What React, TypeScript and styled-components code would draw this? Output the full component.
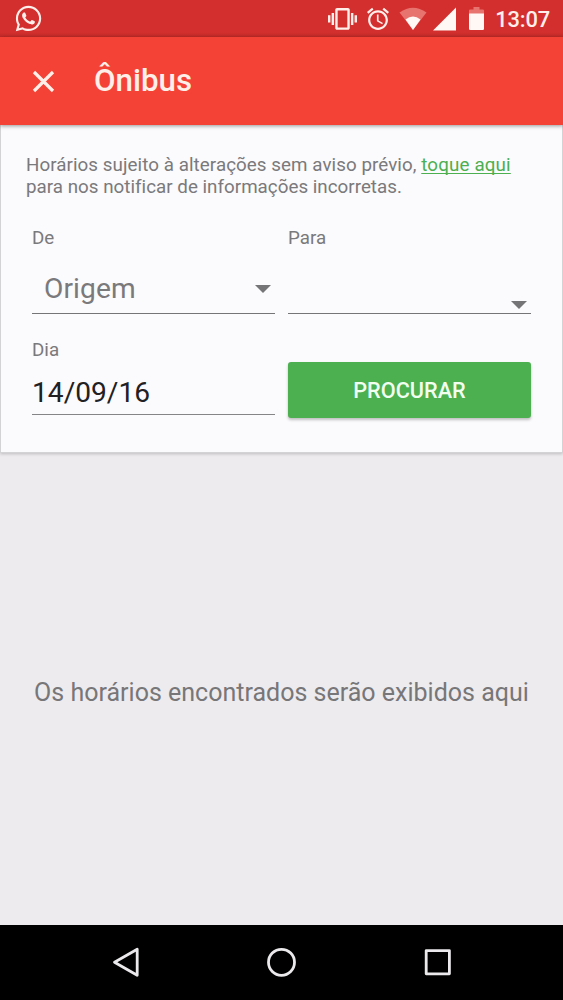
import React from 'react';
import styled, { createGlobalStyle } from 'styled-components';
import { FaWhatsapp } from 'react-icons/fa';

const GlobalStyle = createGlobalStyle`
  * { box-sizing: border-box; }
  body { margin: 0; font-family: Roboto, sans-serif; background: #edebee; }
`;

const Screen = styled.div`
  width: 563px;
  height: 1000px;
  display: flex;
  flex-direction: column;
  overflow: hidden;
  background: #edebee;
`;

const StatusBar = styled.header`
  flex: 0 0 37px;
  display: flex;
  justify-content: space-between;
  padding: 0 13px 0 14px;
  color: #ffeeea;
  background: linear-gradient(#d32f2f 32px, #c42b28 37px);
`;

const Notifications = styled.div`
  padding-top: 4px;
  svg { display: block; }
`;

const Indicators = styled.div`
  display: flex;
  align-items: flex-start;
  svg { display: block; flex: none; }
`;

const Gap = styled.i<{ $w: number }>`
  flex: none;
  width: ${p => p.$w}px;
`;

const Clock = styled.span`
  margin: 7px 0 0 11px;
  font-size: 21.9px;
  font-weight: 500;
  line-height: 26px;
  letter-spacing: -0.15px;
`;

const AppBar = styled.div`
  position: relative;
  flex: 0 0 88px;
  display: flex;
  align-items: center;
  padding-left: 32px;
  gap: 39px;
  color: #ffefe9;
  background: #f44336;
  box-shadow: 0 1px 4px rgba(0, 0, 0, 0.4);
  svg { display: block; }
`;

const Title = styled.h1`
  margin: 0;
  font-size: 31.3px;
  font-weight: 500;
  line-height: 36px;
`;

const Card = styled.section`
  flex: 0 0 328px;
  padding: 29px 31px 0;
  border: 1px solid #d3d2d4;
  border-top: 0;
  background: #fbfafc;
  box-shadow: 0 1px 3px rgba(0, 0, 0, 0.2);
`;

const Notice = styled.p`
  margin: 0 -6px;
  font-size: 18.77px;
  line-height: 22px;
  color: #7a797b;
  white-space: nowrap;
  letter-spacing: 0.02px;
`;

const Lead = styled.span`
  letter-spacing: 0.065px;
`;

const Link = styled.a`
  color: #4caf50;
  letter-spacing: 0.15px;
  text-decoration: underline;
  text-decoration-thickness: 1px;
  text-underline-offset: 2px;
  text-decoration-skip-ink: none;
`;

const Form = styled.div`
  display: grid;
  grid-template-columns: 243px 243px;
  grid-template-rows: 112px 101px;
  column-gap: 13px;
  padding-top: 29px;
`;

const Field = styled.label`
  display: flex;
  flex-direction: column;
`;

const Label = styled.span`
  font-size: 18.77px;
  line-height: 22px;
  color: #7a797b;
`;

const Select = styled.div<{ $low?: boolean }>`
  height: 65px;
  display: flex;
  justify-content: space-between;
  align-items: center;
  padding: ${p => (p.$low ? '48px 4px 0 12px' : '15px 4px 0 12px')};
  border-bottom: 1.5px solid #757476;
  color: #7a797b;
  font-size: 28.15px;
  line-height: 33px;
  letter-spacing: 0.1px;
`;

const Caret = styled.span`
  margin-left: auto;
  border: 8px solid transparent;
  border-top-color: #757476;
  border-bottom: 0;
`;

const DateValue = styled.div`
  height: 54px;
  padding-top: 15px;
  border-bottom: 1.5px solid #858486;
  color: #212022;
  font-size: 28.15px;
  line-height: 33px;
`;

const SearchButton = styled.button`
  height: 56px;
  margin-top: 23px;
  border: 0;
  border-radius: 3px;
  padding: 2px 0 0;
  background: #4caf50;
  box-shadow: 0 2px 3px rgba(0, 0, 0, 0.24);
  color: #f1fff0;
  font: 500 21.7px/26px Roboto, sans-serif;
`;

const Empty = styled.main`
  flex: 1;
  display: flex;
  justify-content: center;
  align-items: center;
  padding-top: 8px;
  color: #777678;
  font-size: 25.03px;
  line-height: 30px;
  white-space: nowrap;
`;

const NavBar = styled.nav`
  flex: 0 0 75px;
  display: flex;
  justify-content: center;
  align-items: center;
  gap: 124px;
  background: #000;
  svg { display: block; fill: none; stroke: #ebe9eb; stroke-linejoin: round; }
`;

const VibrateIcon = () => (
  <svg width="29" height="37" viewBox="0 0 29 37" fill="currentColor">
    <path transform="translate(0 4.500) scale(1.208)" d="M0 15h2V9H0v6zm3 2h2V7H3v10zm19-8v6h2V9h-2zm-3 8h2V7h-2v10zM16.5 3h-9C6.67 3 6 3.67 6 4.5v15c0 .83.67 1.5 1.5 1.5h9c.83 0 1.5-.67 1.5-1.5v-15c0-.83-.67-1.5-1.5-1.5zM16 19H8V5h8v14z" />
  </svg>
);

const AlarmIcon = () => (
  <svg width="22" height="37" viewBox="0 0 22 37" fill="currentColor">
    <path transform="translate(-2.2 5.8) scale(1.1)" d="M22 5.72l-4.6-3.86-1.29 1.53 4.6 3.86L22 5.72zM7.88 3.39L6.6 1.86 2 5.71l1.29 1.53 4.59-3.85zM12.5 8H11v6l4.75 2.85.75-1.23-4-2.37V8zM12 4c-4.97 0-9 4.03-9 9s4.02 9 9 9c4.97 0 9-4.03 9-9s-4.03-9-9-9zm0 16c-3.87 0-7-3.13-7-7s3.13-7 7-7 7 3.13 7 7-3.13 7-7 7z" />
  </svg>
);

const WifiIcon = () => (
  <svg width="28" height="37" viewBox="0 0 28 37">
    <path fill="#e87470" d="M.5 12.5Q14 3 27.500 12.500L14 30Z" />
    <path fill="#fff8f4" d="M6.500 19.500Q14 13.500 21.500 19.500L14 30Z" />
  </svg>
);

const SignalIcon = () => (
  <svg width="23" height="37" viewBox="0 0 23 37" fill="#fff8f4">
    <path d="M23 7.500V30.500H0Z" />
  </svg>
);

const BatteryIcon = () => (
  <svg width="15" height="37" viewBox="0 0 15 37">
    <path fill="#e87470" d="M4.500 7h6v2.500h3.200q1.300 0 1.300 1.300V14H0v-3.200q0-1.300 1.300-1.300h3.200Z" />
    <path fill="#fff8f4" d="M0 13.500h15v15.200q0 1.300-1.300 1.300H1.300Q0 30 0 28.700Z" />
  </svg>
);

export default function App() {
  return (
    <Screen>
      <GlobalStyle />
      <StatusBar>
        <Notifications>
          <FaWhatsapp size={29} />
        </Notifications>
        <Indicators>
          <VibrateIcon />
          <Gap $w={10} />
          <AlarmIcon />
          <Gap $w={10} />
          <WifiIcon />
          <Gap $w={6} />
          <SignalIcon />
          <Gap $w={13} />
          <BatteryIcon />
          <Clock>13:07</Clock>
        </Indicators>
      </StatusBar>
      <AppBar>
        <svg width="23" height="23" viewBox="0 0 23 23" stroke="currentColor" strokeWidth="3.2">
          <path d="M2 2L21 21M21 2L2 21" />
        </svg>
        <Title>Ônibus</Title>
      </AppBar>
      <Card>
        <Notice>
          <Lead>Horários sujeito à alterações sem aviso prévio, </Lead>
          <Link>toque aqui</Link>
          <br />
          para nos notificar de informações incorretas.
        </Notice>
        <Form>
          <Field>
            <Label>De</Label>
            <Select>
              Origem
              <Caret />
            </Select>
          </Field>
          <Field>
            <Label>Para</Label>
            <Select $low>
              <Caret />
            </Select>
          </Field>
          <Field>
            <Label>Dia</Label>
            <DateValue>14/09/16</DateValue>
          </Field>
          <SearchButton>PROCURAR</SearchButton>
        </Form>
      </Card>
      <Empty>Os horários encontrados serão exibidos aqui</Empty>
      <NavBar>
        <svg width="32" height="32" viewBox="0 0 32 32" strokeWidth="2.8">
          <path d="M27.200 2.300V28.300L4.500 15.300Z" />
        </svg>
        <svg width="32" height="32" viewBox="0 0 32 32" strokeWidth="2.8">
          <circle cx="15.500" cy="15.300" r="13" />
        </svg>
        <svg width="32" height="32" viewBox="0 0 32 32" strokeWidth="2.8">
          <rect x="4.200" y="3.600" width="23.200" height="23.200" />
        </svg>
      </NavBar>
    </Screen>
  );
}
